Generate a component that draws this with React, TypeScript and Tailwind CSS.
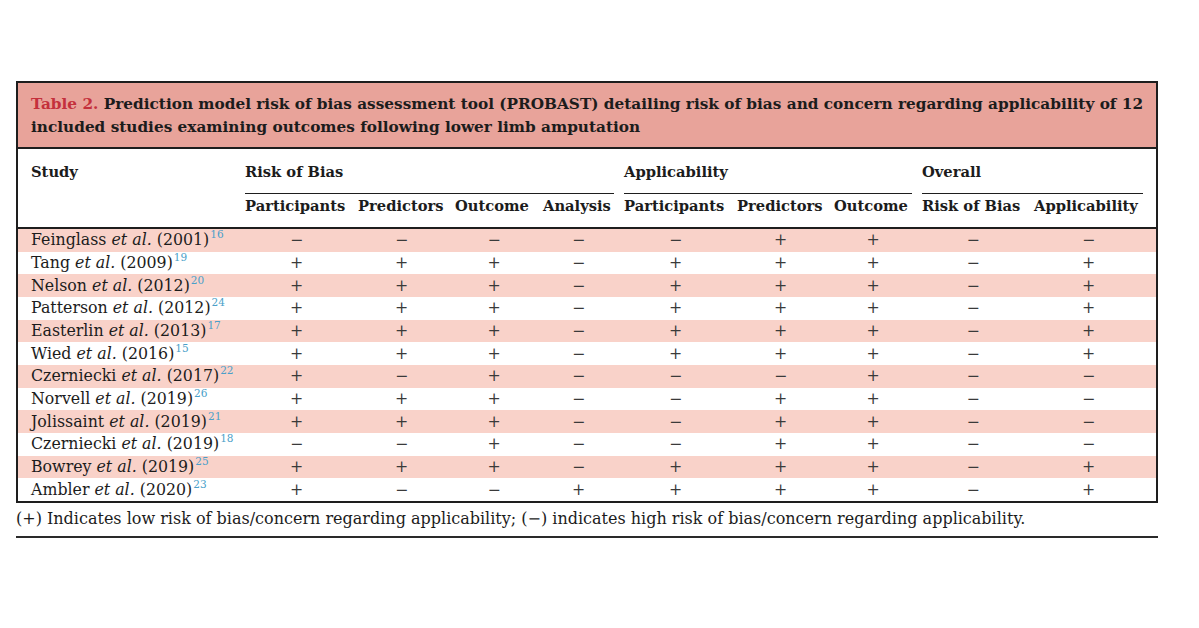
const cols = "grid grid-cols-[204px_103px_87px_78px_71px_103px_87px_78px_102px_109px] gap-x-[10px] px-[13px]"

const rows: [string, string, string, string][] = [
  ["Feinglass", "2001", "16", "−−−−−++−−"],
  ["Tang", "2009", "19", "+++−+++−+"],
  ["Nelson", "2012", "20", "+++−+++−+"],
  ["Patterson", "2012", "24", "+++−+++−+"],
  ["Easterlin", "2013", "17", "+++−+++−+"],
  ["Wied", "2016", "15", "+++−+++−+"],
  ["Czerniecki", "2017", "22", "+−+−−−+−−"],
  ["Norvell", "2019", "26", "+++−−++−−"],
  ["Jolissaint", "2019", "21", "+++−−++−−"],
  ["Czerniecki", "2019", "18", "−−+−−++−−"],
  ["Bowrey", "2019", "25", "+++−+++−+"],
  ["Ambler", "2020", "23", "+−−++++−+"],
]

const subHeads = [
  "Participants",
  "Predictors",
  "Outcome",
  "Analysis",
  "Participants",
  "Predictors",
  "Outcome",
  "Risk of Bias",
  "Applicability",
]

export default function App() {
  return (
    <div className="w-[1199px] h-[628px] bg-white text-[#1c1c1c] font-['DejaVu_Serif',serif] pt-[81px] pl-[16px]">
      <div className="w-[1142px] border-2 border-[#1e1e1e]">
        {/* caption */}
        <div className="bg-[#e8a39a] border-b-2 border-[#1e1e1e] h-[66px] pt-[10px] px-[13px] text-[15.3px] leading-[23px] font-bold whitespace-nowrap">
          <span className="text-[#c4303c]">Table 2.</span> Prediction model risk of bias assessment tool (PROBAST)
          detailing risk of bias and concern regarding applicability of 12
          <br />
          included studies examining outcomes following lower limb amputation
        </div>

        {/* column heads */}
        <div className="border-b-2 border-[#1e1e1e] text-[14.7px] font-bold">
          <div className={`${cols} pt-[12px]`}>
            <div className="leading-[22px]">Study</div>
            <div className="col-span-4 leading-[22px] pb-[10px] border-b-[1.5px] border-[#1e1e1e]">Risk of Bias</div>
            <div className="col-span-3 leading-[22px] pb-[10px] border-b-[1.5px] border-[#1e1e1e]">Applicability</div>
            <div className="col-span-2 leading-[22px] pb-[10px] border-b-[1.5px] border-[#1e1e1e]">Overall</div>
          </div>
          <div className={`${cols} h-[33px] items-start pt-[1px]`}>
            <div />
            {subHeads.map((h, i) => (
              <div key={i} className="leading-[22px] whitespace-nowrap">
                {h}
              </div>
            ))}
          </div>
        </div>

        {/* body */}
        <div className="text-[15.8px]">
          {rows.map(([name, year, ref, marks], i) => (
            <div
              key={i}
              className={`${cols} h-[22.67px] items-center ${i % 2 === 0 ? "bg-[#f9d2c9]" : "bg-white"}`}
            >
              <div className="whitespace-nowrap leading-[20px]">
                {name} <i>et al.</i> ({year})
                <sup className="text-[10.5px] text-[#4a9fc9] ml-[1px] relative -top-[7px]">{ref}</sup>
              </div>
              {marks.split("").map((m, j) => (
                <div key={j} className="text-center text-[#3a3a3a] leading-[20px]">
                  {m}
                </div>
              ))}
            </div>
          ))}
        </div>
      </div>

      <div className="w-[1142px] border-b-[2.5px] border-[#2a2a2a] pt-[5px] pb-[6px] text-[16px] leading-[22px] whitespace-nowrap">
        (+) Indicates low risk of bias/concern regarding applicability; (−) indicates high risk of bias/concern
        regarding applicability.
      </div>
    </div>
  )
}
